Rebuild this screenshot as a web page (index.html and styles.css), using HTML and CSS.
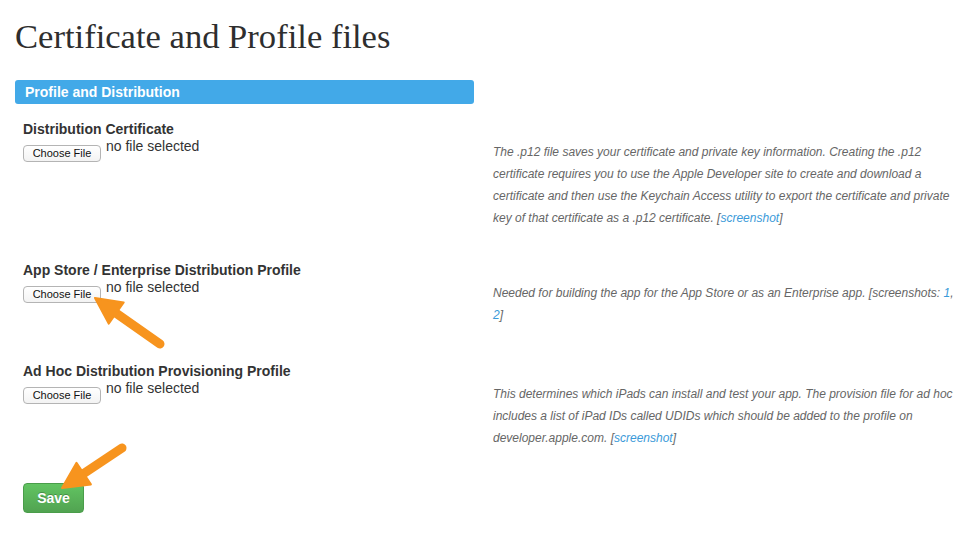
FILE: index.html
```html
<!DOCTYPE html>
<html lang="en">

<head>
    <meta charset="UTF-8">
    <meta name="viewport" content="width=device-width, initial-scale=1.0">
    <title>Certificate and Profile files</title>

    <link rel="stylesheet" href="styles.css">
</head>

<body>
    <div id="wrap">
        <h1 class="title">Certificate and Profile files</h1>

        <div class="panel">
            <div class="panel-head">Profile and Distribution</div>

            <div class="panel-body">
                <div class="row">
                    <div class="field">
                        <p class="label">Distribution Certificate</p>
                        <div class="file">
                            <span class="file-btn">Choose File</span>
                            <span class="file-name">no file selected</span>
                        </div>
                    </div>
                    <p class="help">The .p12 file saves your certificate and private key information. Creating the .p12
                        certificate requires you to use the Apple Developer site to create and download a certificate and
                        then use the Keychain Access utility to export the certificate and private key of that certificate
                        as a .p12 certificate. [<a href="#">screenshot</a>]</p>
                </div>

                <div class="row">
                    <div class="field">
                        <p class="label">App Store / Enterprise Distribution Profile</p>
                        <div class="file">
                            <span class="file-btn">Choose File</span>
                            <span class="file-name">no file selected</span>
                        </div>
                    </div>
                    <p class="help">Needed for building the app for the App Store or as an Enterprise app. [screenshots:
                        <a href="#">1</a>, <a href="#">2</a>]</p>
                </div>

                <div class="row">
                    <div class="field">
                        <p class="label">Ad Hoc Distribution Provisioning Profile</p>
                        <div class="file">
                            <span class="file-btn">Choose File</span>
                            <span class="file-name">no file selected</span>
                        </div>
                    </div>
                    <p class="help">This determines which iPads can install and test your app. The provision file for ad
                        hoc includes a list of iPad IDs called UDIDs which should be added to the profile on
                        developer.apple.com. [<a href="#">screenshot</a>]</p>
                </div>

                <button class="save">Save</button>
            </div>
        </div>

        <!-- annotation arrows drawn over the form -->
        <svg class="arrows" width="968" height="539" viewBox="0 0 968 539">
            <g fill="#f7941e" stroke="#f7941e" stroke-linejoin="round">
                <line x1="113" y1="311" x2="160" y2="344" stroke-width="9" stroke-linecap="round" />
                <polygon points="95,298 123.7,302.4 108.7,323.6" stroke-width="2" />
                <line x1="80" y1="476" x2="122" y2="448" stroke-width="9" stroke-linecap="round" />
                <polygon points="62,488 76.5,462.8 90.9,484.4" stroke-width="2" />
            </g>
        </svg>
    </div>
</body>

</html>
```

FILE: styles.css
```css
* {
    padding: 0;
    margin: 0;
    box-sizing: border-box;
}

body {
    background: #fff;
    font-family: "Liberation Sans", Arial, sans-serif;
    color: #333;
}

#wrap {
    position: relative;
    width: 968px;
    height: 539px;
    padding: 0 10px 0 15px;
    overflow: hidden;
}

.title {
    margin-top: 16px;
    margin-bottom: 24px;
    font-family: "Liberation Serif", "Times New Roman", serif;
    font-weight: 400;
    font-size: 34.6px;
    line-height: 40px;
    color: #2e2e2e;
}

.panel-head {
    width: 459px;
    height: 24px;
    padding: 0 10px;
    border-radius: 3px;
    background: #42a9e8;
    color: #fff;
    font-size: 14px;
    font-weight: 700;
    line-height: 25px;
}

.panel-body {
    padding-top: 17px;
}

.row {
    display: grid;
    grid-template-columns: 478px 465px;
    margin-bottom: 33px;
}

.row + .row {
    margin-bottom: 37px;
}

.field {
    padding-left: 8px;
}

.label {
    font-size: 14px;
    font-weight: 700;
    line-height: 16px;
    color: #333;
}

.file {
    display: flex;
    align-items: flex-start;
    gap: 5px;
    margin-top: 1px;
}

.file-btn {
    display: block;
    width: 78px;
    height: 17px;
    margin-top: 7px;
    border: 1px solid #b4b4b4;
    border-radius: 4px;
    background: linear-gradient(#fff, #f3f3f3);
    font-size: 11px;
    line-height: 15px;
    text-align: center;
    color: #111;
}

.file-name {
    font-size: 14px;
    line-height: 16px;
    color: #333;
}

.help {
    padding-top: 20px;
    font-size: 12px;
    font-style: italic;
    line-height: 22px;
    color: #666;
}

.help a {
    color: #3a9ad9;
    text-decoration: none;
}

.save {
    display: block;
    width: 61px;
    height: 30px;
    margin-left: 8px;
    margin-top: -3px;
    border: 1px solid #4a9d4a;
    border-radius: 4px;
    background: linear-gradient(#62c462, #51a351);
    color: #fff;
    font-family: "Liberation Sans", Arial, sans-serif;
    font-size: 14px;
    font-weight: 700;
    text-shadow: 0 -1px 0 rgba(0, 0, 0, 0.25);
}

.arrows {
    position: absolute;
    top: 0;
    left: 0;
    pointer-events: none;
}
```
